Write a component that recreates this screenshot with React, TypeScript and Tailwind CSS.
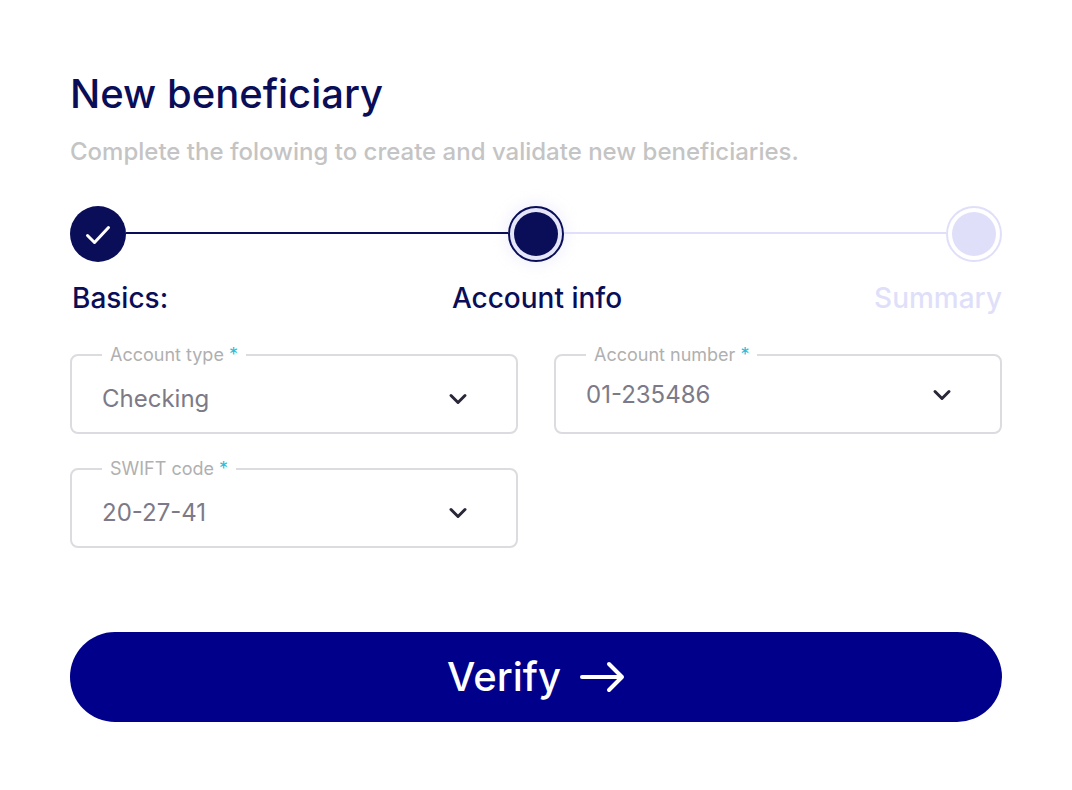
import { useState } from "react"

interface FieldProps {
  id: string
  label: string
  options: string[]
  raised?: boolean
}

function SelectField({ id, label, options, raised = false }: FieldProps) {
  const [value, setValue] = useState(options[0])

  return (
    <fieldset className="min-w-0 rounded-lg border-2 border-[#dcdce0]">
      <legend className="ml-[30px] px-2 text-lg leading-5 text-[#b0b0b0]">
        <label htmlFor={id}>
          {label} <span className="text-[#2bbcd8]">*</span>
        </label>
      </legend>
      <div className={raised ? "relative pb-2" : "relative"}>
        <select
          id={id}
          value={value}
          onChange={(e) => setValue(e.target.value)}
          className={`block w-full cursor-pointer appearance-none bg-transparent pr-20 pl-[30px] text-2xl text-[#7c7a88] outline-none ${
            raised ? "h-[59px]" : "h-[67px]"
          }`}
        >
          {options.map((option) => (
            <option key={option}>{option}</option>
          ))}
        </select>
        <svg
          className={`pointer-events-none absolute right-12 h-3 w-5 ${raised ? "top-6" : "top-7"}`}
          viewBox="0 0 20 12"
          fill="none"
          stroke="#2a2838"
          strokeWidth="3"
          strokeLinecap="round"
          strokeLinejoin="round"
          aria-hidden="true"
        >
          <path d="M3 2.5l7 7 7-7" />
        </svg>
      </div>
    </fieldset>
  )
}

function Stepper() {
  return (
    <div className="mt-[38px]">
      <div className="flex items-center">
        <div className="flex size-14 items-center justify-center rounded-full bg-[#0a0e58]">
          <svg
            className="size-7"
            viewBox="0 0 28 28"
            fill="none"
            stroke="white"
            strokeWidth="3"
            strokeLinecap="round"
            strokeLinejoin="round"
            aria-hidden="true"
          >
            <path d="M3.5 15.5l7 7 14-15" />
          </svg>
        </div>
        {/* z-10 keeps the connector above the active step's glow */}
        <div className="z-10 mb-0.5 h-0.5 flex-1 bg-[#0a0e58]" />
        <div className="size-14 rounded-full border-2 border-[#0a0e58] bg-[#e6e6fa] p-1 shadow-[0_0_16px_rgba(223,223,250,0.7)]">
          <div className="h-full rounded-full bg-[#0a0e58]" />
        </div>
        <div className="z-10 mb-0.5 h-0.5 flex-1 bg-[#dfdffa]" />
        <div className="size-14 rounded-full border-2 border-[#dfdffa] bg-white p-1">
          <div className="h-full rounded-full bg-[#dfdffa]" />
        </div>
      </div>
      <ol className="mt-5 grid grid-cols-3 pl-0.5 text-[28px] leading-8 font-medium text-[#0a0e58]">
        <li>Basics:</li>
        <li className="text-center" aria-current="step">
          Account info
        </li>
        <li className="text-right text-[#dfdffa]">Summary</li>
      </ol>
    </div>
  )
}

export default function App() {
  return (
    <main className="min-h-screen bg-white px-[70px] py-[68px] font-['Inter',sans-serif]">
      <h1 className="text-[40px] leading-[52px] font-medium text-[#0a0e58]">New beneficiary</h1>
      <p className="mt-4 text-2xl leading-8 font-medium text-[#c4c4c4]">
        Complete the folowing to create and validate new beneficiaries.
      </p>

      <Stepper />

      <form onSubmit={(e) => e.preventDefault()}>
        <div className="mt-[31px] grid grid-cols-2 gap-x-9 gap-y-[25px]">
          <SelectField id="account-type" label="Account type" options={["Checking", "Savings"]} />
          <SelectField id="account-number" label="Account number" options={["01-235486"]} raised />
          <SelectField id="swift-code" label="SWIFT code" options={["20-27-41"]} />
        </div>

        <button
          type="submit"
          className="mt-[84px] flex h-[90px] w-full cursor-pointer items-center justify-center gap-[18px] rounded-full bg-[#00008b] text-[40px] font-medium text-white"
        >
          Verify
          <svg
            className="h-8 w-[46px]"
            viewBox="0 0 46 32"
            fill="none"
            stroke="currentColor"
            strokeWidth="4"
            strokeLinecap="round"
            strokeLinejoin="round"
            aria-hidden="true"
          >
            <path d="M3 16h40M30 3l13 13-13 13" />
          </svg>
        </button>
      </form>
    </main>
  )
}
